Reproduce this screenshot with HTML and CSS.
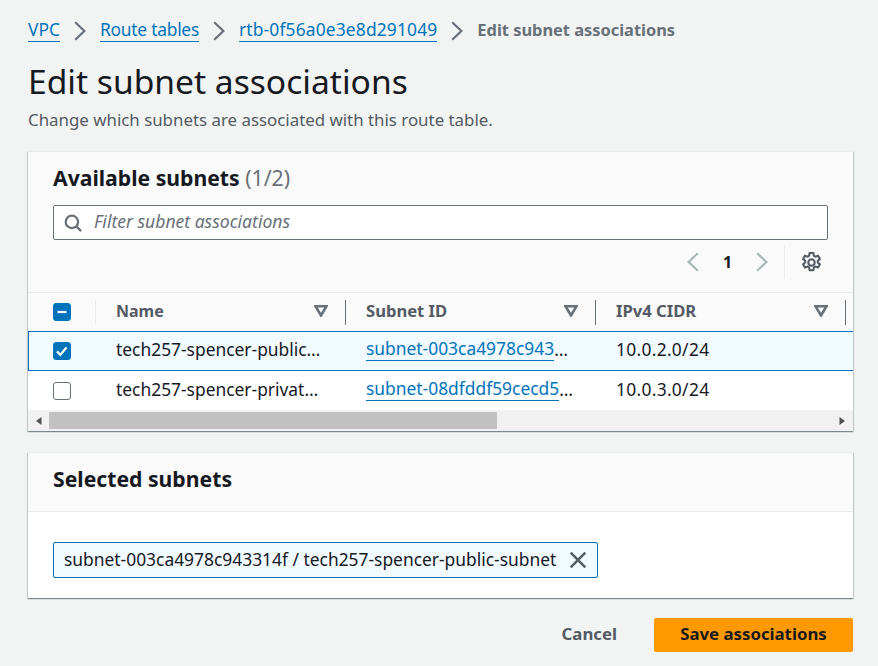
FILE: index.html
```html
<!DOCTYPE html>
<html lang="en">
<head>
<meta charset="utf-8">
<title>Edit subnet associations</title>
<link rel="stylesheet" href="styles.css">
</head>
<body>
<nav class="crumbs">
  <a class="link" href="#">VPC</a>
  <svg class="sep" viewBox="0 0 12 20"><path d="M1.2 1.2L10.4 10l-9.2 8.8"/></svg>
  <a class="link tight" href="#">Route tables</a>
  <svg class="sep" viewBox="0 0 12 20"><path d="M1.2 1.2L10.4 10l-9.2 8.8"/></svg>
  <a class="link wide" href="#">rtb-0f56a0e3e8d291049</a>
  <svg class="sep" viewBox="0 0 12 20"><path d="M1.2 1.2L10.4 10l-9.2 8.8"/></svg>
  <span class="crumb-current">Edit subnet associations</span>
</nav>
<h1 class="title">Edit subnet associations</h1>
<p class="desc">Change which subnets are associated with this route table.</p>

<section class="card card-table">
  <div class="card-top">
    <h2 class="card-title">Available subnets <span class="count">(1/2)</span></h2>
    <div class="search">
      <svg class="search-icon" viewBox="0 0 16 16"><circle cx="7" cy="7" r="5.5"/><path d="M11 11l4.2 4.2"/></svg>
      <span class="placeholder">Filter subnet associations</span>
    </div>
    <div class="pager">
      <svg class="pg-arrow" viewBox="0 0 12 20"><path d="M10.8 1.2L1.6 10l9.2 8.8"/></svg>
      <span class="pg-num">1</span>
      <svg class="pg-arrow" viewBox="0 0 12 20"><path d="M1.2 1.2L10.4 10l-9.2 8.8"/></svg>
      <span class="pg-div"></span>
      <svg class="gear" viewBox="0 0 20 20"><path d="M8.4 1.8h3.2l.5 2.4 1.3.7 2.3-.8 1.6 2.8-1.8 1.6v1.5l1.8 1.6-1.6 2.8-2.3-.8-1.3.7-.5 2.4H8.4l-.5-2.4-1.3-.7-2.3.8-1.6-2.8 1.8-1.6V8.5L2.7 6.9l1.6-2.8 2.3.8 1.3-.7z"/><circle cx="10" cy="10" r="2.8"/></svg>
    </div>
  </div>
  <div class="grid head">
    <div class="cell-check"><span class="cb on"><svg viewBox="0 0 16 16"><path d="M3.5 8h9"/></svg></span><i class="sep-light"></i></div>
    <div class="th th-name">Name<svg class="caret" viewBox="0 0 14 12"><path d="M1.5 1.2h11L7 10.5z"/></svg></div>
    <div class="th">Subnet ID<svg class="caret" viewBox="0 0 14 12"><path d="M1.5 1.2h11L7 10.5z"/></svg></div>
    <div class="th">IPv4 CIDR<svg class="caret" viewBox="0 0 14 12"><path d="M1.5 1.2h11L7 10.5z"/></svg></div>
  </div>
  <div class="grid row selected">
    <div class="cell-check"><span class="cb on"><svg viewBox="0 0 16 16"><path d="M3 8.4l3.4 3.4 6.2-7.4"/></svg></span></div>
    <div class="td">tech257-spencer-public…</div>
    <div class="td"><a class="link" href="#">subnet-003ca4978c943</a><span>…</span></div>
    <div class="td cidr">10.0.2.0/24</div>
  </div>
  <div class="grid row last">
    <div class="cell-check"><span class="cb"></span></div>
    <div class="td">tech257-spencer-privat…</div>
    <div class="td"><a class="link" href="#">subnet-08dfddf59cecd5</a><span>…</span></div>
    <div class="td cidr">10.0.3.0/24</div>
  </div>
  <div class="scrollbar">
    <svg class="sb-arrow" viewBox="0 0 6 8"><path d="M5.5 0v8L0 4z"/></svg>
    <div class="sb-track"><div class="sb-thumb"></div></div>
    <svg class="sb-arrow" viewBox="0 0 6 8"><path d="M.5 0v8L6 4z"/></svg>
  </div>
</section>

<section class="card card-selected">
  <h2 class="selected-head">Selected subnets</h2>
  <div class="selected-body">
    <div class="tag">
      <span class="tag-text">subnet-003ca4978c943314f / tech257-spencer-public-subnet</span>
      <svg class="tag-x" viewBox="0 0 16 16"><path d="M1.5 1.5l13 13M14.5 1.5l-13 13"/></svg>
    </div>
  </div>
</section>

<footer class="actions">
  <span class="cancel">Cancel</span>
  <span class="save">Save associations</span>
</footer>
</body>
</html>
```

FILE: styles.css
```css
* { box-sizing: border-box; }
html, body { margin: 0; height: 666px; overflow: hidden; }
body {
  background: #f2f3f3;
  padding: 18px 25px 0 28px;
  font-family: "Noto Sans", "Open Sans", sans-serif;
  font-size: 17.4px;
  color: #16191f;
}
.link { color: #0073bb; text-decoration: none; border-bottom: 1px solid #0073bb; line-height: 23px; }
.crumbs { display: flex; align-items: center; height: 24px; font-size: 17.4px; }
.crumbs .link { height: 24px; }
.tight { letter-spacing: -.25px; }
.wide { letter-spacing: .15px; }
.sep { width: 12px; height: 20px; margin: 2px 14px 0; fill: none; stroke: #687078; stroke-width: 2.2; }
.crumb-current { color: #687078; font-weight: 700; font-size: 16.4px; padding-bottom: 2px; }
.title { margin: 18px 0 0; font-size: 33.6px; line-height: 42px; font-weight: 400; }
.desc { margin: 8px 0 0; font-size: 16.87px; line-height: 20px; color: #545b64; }
.card { background: #fff; box-shadow: 0 1px 1px rgba(0,28,36,.3), 1px 1px 1px rgba(0,28,36,.15), -1px 1px 1px rgba(0,28,36,.15); }
.card-table { margin-top: 21px; height: 280px; }
.card-top { background: #fafafa; padding: 13px 25px 0; height: 142px; border-bottom: 1px solid #eaeded; border-top: 1px solid #eaeded; }
.card-title { margin: 0; font-size: 21.2px; line-height: 26px; font-weight: 700; }
.count { font-weight: 400; color: #687078; }
.search { display: flex; align-items: center; height: 35px; margin-top: 14px; background: #fff; border: 1px solid #687078; border-radius: 2px; padding-left: 10px; }
.search-icon { width: 18px; height: 18px; fill: none; stroke: #687078; stroke-width: 2; }
.placeholder { margin-left: 12px; font-style: italic; color: #687078; font-size: 17.55px; padding-bottom: 4px; }
.pager { display: flex; align-items: center; justify-content: flex-end; height: 34px; margin-top: 5px; }
.pg-arrow { width: 12px; height: 20px; fill: none; stroke: #aab7b8; stroke-width: 2.2; }
.pg-num { width: 57px; text-align: center; font-weight: 700; font-size: 16px; color: #16191f; }
.pg-div { width: 1px; height: 34px; background: #eaeded; margin: 0 15px 0 16px; }
.gear { width: 23px; height: 23px; margin-right: 5px; fill: none; stroke: #545b64; stroke-width: 1.8; }
.grid { display: grid; grid-template-columns: 68px 250px 250px 250px 1fr; }
.head { height: 38px; background: #fafafa; }
.cell-check { display: flex; align-items: center; align-self: stretch; padding-left: 25px; position: relative; }
.cb { display: flex; width: 18px; height: 18px; border: 1px solid #687078; border-radius: 3px; background: #fff; }
.cb.on { background: #0073bb; border-color: #0073bb; }
.cb svg { width: 16px; height: 16px; fill: none; stroke: #fff; stroke-width: 2.2; }
.sep-light { position: absolute; right: 0; top: 7px; width: 1px; height: 25px; background: #eaeded; }
.th { display: flex; align-items: center; justify-content: space-between; padding: 0 18px 3px 20px; font-weight: 700; color: #545b64; position: relative; font-size: 16.6px; }
.th::after { content: ""; position: absolute; right: 0; top: 7px; width: 1px; height: 25px; background: #687078; }
.th-name { font-size: 16px; padding-bottom: 2px; }
.caret { width: 14px; height: 12px; fill: none; stroke: #687078; stroke-width: 2.6; flex: none; }
.row { height: 40px; background: #fff; align-items: center; }
.row.last { height: 39px; }
.row.selected { background: #f1faff; box-shadow: inset 1px 0 #0073bb, inset 0 1px #0073bb, inset 0 -1px #0073bb; }
.row .td { padding: 0 0 4px 20px; white-space: nowrap; display: flex; }
.row.selected .td { padding-bottom: 5px; }
.td.cidr { letter-spacing: .3px; }
.scrollbar { display: flex; align-items: center; height: 21px; background: #f1f1f1; padding: 0 8px; }
.sb-arrow { width: 6px; height: 8px; fill: #505050; flex: none; }
.sb-track { flex: 1; height: 17px; margin: 0 7px; }
.sb-thumb { width: 448px; height: 17px; background: #c1c1c1; }
.card-selected { margin-top: 21px; height: 146px; }
.selected-head { margin: 0; height: 60px; padding: 13px 25px 0; background: #fafafa; border-top: 1px solid #eaeded; border-bottom: 1px solid #eaeded; font-size: 21.2px; line-height: 26px; font-weight: 700; }
.selected-body { padding: 30px 25px; }
.tag { display: flex; align-items: center; justify-content: space-between; width: 545px; height: 36px; padding: 0 10px; background: #f1faff; border: 1px solid #0073bb; border-radius: 2px; white-space: nowrap; }
.tag-text { padding-bottom: 3px; }
.tag-x { width: 18px; height: 18px; fill: none; stroke: #545b64; stroke-width: 2.2; flex: none; }
.actions { display: flex; align-items: center; justify-content: flex-end; margin-top: 20px; font-size: 16.8px; }
.cancel { font-weight: 700; color: #545b64; margin-right: 37px; padding-bottom: 3px; }
.save { display: flex; align-items: center; justify-content: center; width: 199px; height: 34px; padding-bottom: 3px; background: #ff9900; border-radius: 2px; font-weight: 700; color: #16191f; }
```
